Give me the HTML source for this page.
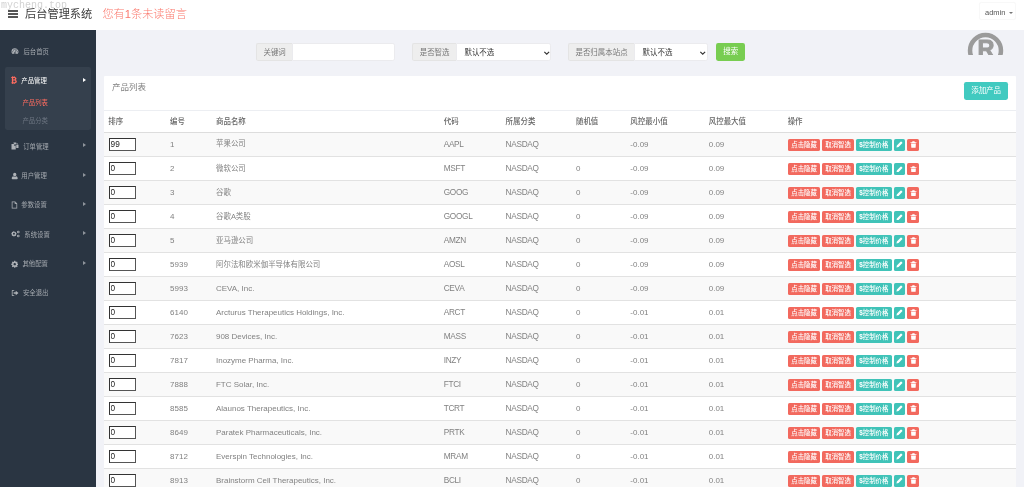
<!DOCTYPE html>
<html lang="zh-CN">
<head>
<meta charset="utf-8">
<title>后台管理系统</title>
<style>
html,body{margin:0;padding:0;width:1024px;height:487px;overflow:hidden;background:#f1f2f7}
*{box-sizing:border-box}
#app{position:absolute;left:0;top:0;width:1920px;height:914px;zoom:0.533333;font-family:"Liberation Sans","Noto Sans CJK SC",sans-serif;font-size:13px;line-height:1.428571;color:#797979;overflow:hidden;will-change:transform}
a{text-decoration:none;color:inherit}
/* header */
.header{position:absolute;left:0;top:0;width:1920px;height:56px;background:#fff}
.toggle{position:absolute;left:15px;top:19px;width:18px;height:15px}
.toggle i{display:block;height:3px;background:#555;margin-bottom:2.500px;border-radius:.5px}
.logo{position:absolute;left:47px;top:11px;height:32px;line-height:32px;font-size:21px;color:#3c3c3c;white-space:nowrap}
.notice{position:absolute;left:192px;top:11px;height:32px;line-height:32px;font-size:21px;color:#fb786d;font-weight:300;white-space:nowrap}
.user{position:absolute;left:1836px;top:3px;width:69px;height:35px;border:1px solid #f8f8f8;border-radius:4px;font-size:14px;color:#555;line-height:33px;padding-left:9px;padding-top:3px;white-space:nowrap}
.user .caret{display:inline-block;width:0;height:0;border-left:4.500px solid transparent;border-right:4.500px solid transparent;border-top:4.500px solid #777;margin-left:7px;vertical-align:2px}
/* sidebar */
.sidebar{position:absolute;left:0;top:56px;width:180px;height:858px;background:#2a3542}
.menu{list-style:none;margin:15px 0 0 0;padding:0}
.menu>li{margin:0 10px 5px 10px;border-radius:4px;position:relative}
.menu>li>a{display:block;height:50px;line-height:50px;padding-left:10px;font-size:12px;color:#a4a9af;position:relative;white-space:nowrap}
.menu>li>a svg{position:absolute;left:10px;top:18px}
.menu>li>a span{position:absolute;top:1.800px}
.menu>li.active{background:#35404d}
.menu>li.active>a{color:#fff}
.arr{position:absolute;left:145px;top:20px;width:0;height:0;border-top:4.700px solid transparent;border-bottom:4.700px solid transparent;border-left:6.500px solid #8f959c}
.active .arr{border-left-color:#fff}
.sub{list-style:none;margin:0;padding:0 0 0 0}
.sub li{height:36px;line-height:34px;padding-left:32px;font-size:12px;color:#6d7682;white-space:nowrap}
.sub li.on{color:#ff6c60}
.sub li:last-child{height:32px;line-height:31px}
/* search */
.grp{position:absolute;top:81px;height:34px;font-size:14px}
.addon{position:absolute;left:0;top:0;height:34px;line-height:32px;border:1px solid #e4e4e4;border-right:0;background:#eee;color:#777;text-align:center;border-radius:4px 0 0 4px;white-space:nowrap}
.ctl{position:absolute;top:0;height:34px;line-height:32px;border:1px solid #ebebee;background:#fff;border-radius:0 4px 4px 0;color:#333;padding-left:14px;white-space:nowrap}
.ctl svg{position:absolute;right:.5px;top:11px}
.go{position:absolute;left:1343px;top:81px;width:54px;height:34px;line-height:34px;background:#78cd51;color:#fff;font-size:14px;text-align:center;border-radius:4px}
/* panel */
.panel{position:absolute;left:195px;top:143px;width:1710px;height:800px;background:#fff;border-radius:2px 2px 0 0}
.ptitle{position:absolute;left:15px;top:9px;font-size:16px;line-height:26px;color:#808080;font-weight:400;white-space:nowrap}
.add{position:absolute;left:1613px;top:11px;width:82px;height:34px;line-height:34px;background:#41cac0;color:#fff;font-size:14px;text-align:center;border-radius:4px;white-space:nowrap}
table{position:absolute;left:0;top:63.500px;width:1710px;border-collapse:separate;border-spacing:0;table-layout:fixed;font-size:14px}
th,td{padding:0 8px;text-align:left;white-space:nowrap;overflow:hidden;vertical-align:middle}
th{height:42.500px;border-top:1px solid #eceef2;border-bottom:2px solid #ddd;font-weight:500;color:#666;padding-top:2px}
td{height:45px;border-top:1px solid #e2e2e2;color:#828282;padding-top:1px}
tbody tr:first-child td{border-top:0;height:44px}
tbody tr:nth-child(odd){background:#f9f9f9}
.c1{width:116px}.c2{width:86px}.c3{width:427px}.c4{width:116px}.c5{width:132px}.c6{width:102px}.c7{width:147px}.c8{width:148px}.c9{width:436px}
input.sort{display:block;position:relative;top:-.6px;width:50px;height:24.800px;padding-top:1px !important;margin-left:1.500px !important;border:2px solid #333;border-right-color:#555;border-bottom-color:#555;border-radius:0;padding:0 1px;margin:0;font-family:"Liberation Sans",sans-serif;font-size:15.500px;color:#222;background:#fff;outline:0}
.bx{display:inline-block;height:22px;line-height:22px;padding:0 6px;font-size:12px;font-weight:500;color:#fff;border-radius:3px;vertical-align:middle;white-space:nowrap}
.bx.red{background:#f2695e}
.bx.teal{background:#40c3b8}
.bx.sq{width:22px;padding:0;text-align:center}
.bx .ic{vertical-align:-2.500px}
.dl{font-weight:bold;font-size:12px;margin-right:0}
td.c9{padding-left:9px;word-spacing:0;letter-spacing:0}
.en{font-size:15px}
.up{font-size:15.500px;letter-spacing:-.55px}
/* overlays */
.wm{position:absolute;left:1px;top:-.6px;font-family:"Liberation Mono",monospace;font-size:10px;line-height:14px;color:#d2d2d2;white-space:nowrap;letter-spacing:0}
.reg{position:absolute;left:964px;top:30px;width:44px;height:25px;overflow:hidden}
</style>
</head>
<body>
<div id="app">
  <div class="header">
    <div class="toggle"><i></i><i></i><i></i></div>
    <a class="logo">后台管理系统</a>
    <span class="notice">您有1条未读留言</span>
    <div class="user">admin<i class="caret"></i></div>
  </div>

  <div class="sidebar">
    <ul class="menu">
      <li><a><svg width="15" height="15" viewBox="0 0 16 16"><path d="M8 2.500a7 7 0 0 0-7 7c0 1.500.5 2.900 1.300 4h11.400A7 7 0 0 0 8 2.500zm0 1.600a1 1 0 1 1 0 2 1 1 0 0 1 0-2zM3.500 10.500a1 1 0 1 1 0-2 1 1 0 0 1 0 2zm1.200-3.400a1 1 0 1 1 0-2 1 1 0 0 1 0 2zM9.300 11.300a1.500 1.500 0 1 1-1.800-1l1.200-4 1 .3-1.200 4c.4.100.7.400.8.700zm2-4.200a1 1 0 1 1 0-2 1 1 0 0 1 0 2zm1.200 3.400a1 1 0 1 1 0-2 1 1 0 0 1 0 2z" fill="#aeb2b7"/></svg><span style="left:34px">后台首页</span></a></li>
      <li class="active"><a><svg width="14" height="16" viewBox="0 0 12 16" preserveAspectRatio="none" style="left:8px;top:16px"><path d="M2 2h1.500V.5H5V2h1V.5h1.500v1.600C9.300 2.400 10.400 3.300 10.400 5c0 1.200-.6 2-1.500 2.400 1.300.4 2.100 1.300 2.100 2.800 0 2.100-1.400 3.200-3.500 3.400v1.700H6V13.700H5v1.600H3.500V13.700H2v-1.600h1V3.600H2zm3.200 1.700v3h1.300c1 0 1.600-.5 1.600-1.500S7.500 3.700 6.500 3.700zm0 4.700v3.500h1.600c1.100 0 1.800-.6 1.800-1.700s-.7-1.800-1.900-1.800z" fill="#ff6c60"/></svg><span style="left:30px">产品管理</span><i class="arr"></i></a>
        <ul class="sub"><li class="on">产品列表</li><li>产品分类</li></ul>
      </li>
      <li><a><svg width="15" height="15" viewBox="0 0 16 16"><path d="M1 4h5v3.500h3.500V15H1zM7 4l2.500 2.500H7zM5 1h5v3.500H7L5 2.700zm6 0l3.500 3.500H11zm0 4.500h4V12h-4.500V6.500z" fill="#aeb2b7"/></svg><span style="left:33.500px">订单管理</span><i class="arr"></i></a></li>
      <li><a><svg width="14" height="15" viewBox="0 0 14 16"><path d="M7 1.500a3.300 3.300 0 0 1 3.300 3.300c0 1.900-1.500 3.700-3.300 3.700S3.700 6.700 3.700 4.800A3.300 3.300 0 0 1 7 1.500zM1 13.200c0-2.600 1.200-4.300 3-4.700.8.700 1.800 1.100 3 1.100s2.200-.4 3-1.100c1.800.4 3 2.100 3 4.700 0 .9-.7 1.500-1.600 1.500H2.600c-.9 0-1.600-.6-1.600-1.500z" fill="#aeb2b7"/></svg><span style="left:30px">用户管理</span><i class="arr"></i></a></li>
      <li><a><svg width="13" height="15" viewBox="0 0 14 16"><path d="M1.500 1h7l4 4v10h-11zM3 2.500v11h8V6H7.500V2.500zM9 3v1.500h1.500z" fill="#aeb2b7" fill-rule="evenodd"/></svg><span style="left:30px">参数设置</span><i class="arr"></i></a></li>
      <li><a><svg width="18" height="15" viewBox="0 0 19 16"><g fill="#aeb2b7"><path d="M6.500 4.200l1.300.3.800-.9 1.300.9-.5 1.100.7 1.100 1.200.1v1.600l-1.200.3-.5 1.200.7 1-1.100 1.100-1.100-.6-1.200.5-.3 1.200H5l-.3-1.200-1.200-.5-1 .6-1.200-1.100.7-1-.5-1.200L.300 8.400V6.800l1.200-.2.500-1.200-.7-1 1.200-1.100 1 .6 1.200-.5.300-1.200h1.600zM5.800 5.600a2 2 0 1 0 0 4 2 2 0 0 0 0-4z" fill-rule="evenodd"/><circle cx="14.500" cy="4" r="2.600"/><circle cx="14.500" cy="12" r="2.600"/></g><circle cx="14.500" cy="4" r="1" fill="#2a3542"/><circle cx="14.500" cy="12" r="1" fill="#2a3542"/></svg><span style="left:35.500px">系统设置</span><i class="arr"></i></a></li>
      <li><a><svg width="14" height="15" viewBox="0 0 16 16"><path d="M9.200 1l.4 1.900 1.300.6 1.700-1 1.600 1.600-1 1.700.6 1.300 1.900.4v2.300l-1.900.4-.6 1.300 1 1.700-1.600 1.600-1.700-1-1.300.6-.4 1.900H6.900l-.4-1.900-1.300-.6-1.700 1-1.600-1.600 1-1.700-.6-1.300L.400 9.800V7.500l1.900-.4.600-1.300-1-1.700L3.500 2.500l1.700 1 1.300-.6L6.900 1zM8 5.700a2.600 2.600 0 1 0 0 5.200 2.600 2.600 0 0 0 0-5.200z" fill="#aeb2b7" fill-rule="evenodd"/></svg><span style="left:32px">其他配置</span><i class="arr"></i></a></li>
      <li><a><svg width="15" height="15" viewBox="0 0 16 16"><path d="M6.500 2v1.600H3.200v8.800h3.300V14H2.400A.8.800 0 0 1 1.600 13.200V2.800A.8.800 0 0 1 2.400 2zM9.500 3.500L15 8l-5.500 4.500V9.700H5.300V6.300h4.200z" fill="#aeb2b7"/></svg><span style="left:33px">安全退出</span></a></li>
    </ul>
  </div>

  <div class="grp" style="left:480px;width:261px"><span class="addon" style="width:68px">关键词</span><span class="ctl" style="left:68px;width:193px"></span></div>
  <div class="grp" style="left:773px;width:261px"><span class="addon" style="width:82px">是否智选</span><span class="ctl" style="left:82px;width:179px">默认不选<svg width="14" height="12" viewBox="0 0 14 12"><path d="M2.500 3.500L7 8l4.500-4.500" fill="none" stroke="#333" stroke-width="2.200"/></svg></span></div>
  <div class="grp" style="left:1065px;width:262px"><span class="addon" style="width:124px">是否归属本站点</span><span class="ctl" style="left:124px;width:138px">默认不选<svg width="14" height="12" viewBox="0 0 14 12"><path d="M2.500 3.500L7 8l4.500-4.500" fill="none" stroke="#333" stroke-width="2.200"/></svg></span></div>
  <a class="go">搜索</a>

  <div class="panel">
    <div class="ptitle">产品列表</div>
    <a class="add">添加产品</a>
    <table>
      <thead><tr><th class="c1">排序</th><th class="c2">编号</th><th class="c3">商品名称</th><th class="c4">代码</th><th class="c5">所属分类</th><th class="c6">随机值</th><th class="c7">风控最小值</th><th class="c8">风控最大值</th><th class="c9">操作</th></tr></thead>
      <tbody>
<tr><td class="c1"><input class="sort" type="text" value="99"></td><td class="c2 en">1</td><td class="c3">苹果公司</td><td class="c4 up">AAPL</td><td class="c5 up">NASDAQ</td><td class="c6 en"></td><td class="c7 en">-0.09</td><td class="c8 en">0.09</td><td class="c9"><a class="bx red">点击隐藏</a> <a class="bx red">取消智选</a> <a class="bx teal"><b class="dl">$</b>控制价格</a> <a class="bx teal sq"><svg class="ic" viewBox="0 0 12 12" width="13" height="13"><path d="M.8 11.200l.7-3.600L7.900 1.200a1.200 1.200 0 0 1 1.700 0l1.200 1.200a1.200 1.200 0 0 1 0 1.700L4.400 10.500z" fill="#fff"/></svg></a> <a class="bx red sq"><svg class="ic" viewBox="0 0 12 12" width="13" height="13"><path d="M4.300.5h3.400l.8 1.500H11.200v1.500H.8V2h2.700zM1.800 4.200h8.400l-.5 7.300H2.300z" fill="#fff"/></svg></a></td></tr>
<tr><td class="c1"><input class="sort" type="text" value="0"></td><td class="c2 en">2</td><td class="c3">微软公司</td><td class="c4 up">MSFT</td><td class="c5 up">NASDAQ</td><td class="c6 en">0</td><td class="c7 en">-0.09</td><td class="c8 en">0.09</td><td class="c9"><a class="bx red">点击隐藏</a> <a class="bx red">取消智选</a> <a class="bx teal"><b class="dl">$</b>控制价格</a> <a class="bx teal sq"><svg class="ic" viewBox="0 0 12 12" width="13" height="13"><path d="M.8 11.200l.7-3.600L7.900 1.200a1.200 1.200 0 0 1 1.700 0l1.200 1.200a1.200 1.200 0 0 1 0 1.700L4.400 10.500z" fill="#fff"/></svg></a> <a class="bx red sq"><svg class="ic" viewBox="0 0 12 12" width="13" height="13"><path d="M4.300.5h3.400l.8 1.500H11.200v1.500H.8V2h2.700zM1.800 4.200h8.400l-.5 7.300H2.300z" fill="#fff"/></svg></a></td></tr>
<tr><td class="c1"><input class="sort" type="text" value="0"></td><td class="c2 en">3</td><td class="c3">谷歌</td><td class="c4 up">GOOG</td><td class="c5 up">NASDAQ</td><td class="c6 en">0</td><td class="c7 en">-0.09</td><td class="c8 en">0.09</td><td class="c9"><a class="bx red">点击隐藏</a> <a class="bx red">取消智选</a> <a class="bx teal"><b class="dl">$</b>控制价格</a> <a class="bx teal sq"><svg class="ic" viewBox="0 0 12 12" width="13" height="13"><path d="M.8 11.200l.7-3.600L7.900 1.200a1.200 1.200 0 0 1 1.700 0l1.200 1.200a1.200 1.200 0 0 1 0 1.700L4.400 10.500z" fill="#fff"/></svg></a> <a class="bx red sq"><svg class="ic" viewBox="0 0 12 12" width="13" height="13"><path d="M4.300.5h3.400l.8 1.500H11.200v1.500H.8V2h2.700zM1.800 4.200h8.400l-.5 7.300H2.300z" fill="#fff"/></svg></a></td></tr>
<tr><td class="c1"><input class="sort" type="text" value="0"></td><td class="c2 en">4</td><td class="c3">谷歌A类股</td><td class="c4 up">GOOGL</td><td class="c5 up">NASDAQ</td><td class="c6 en">0</td><td class="c7 en">-0.09</td><td class="c8 en">0.09</td><td class="c9"><a class="bx red">点击隐藏</a> <a class="bx red">取消智选</a> <a class="bx teal"><b class="dl">$</b>控制价格</a> <a class="bx teal sq"><svg class="ic" viewBox="0 0 12 12" width="13" height="13"><path d="M.8 11.200l.7-3.600L7.900 1.200a1.200 1.200 0 0 1 1.700 0l1.200 1.200a1.200 1.200 0 0 1 0 1.700L4.400 10.500z" fill="#fff"/></svg></a> <a class="bx red sq"><svg class="ic" viewBox="0 0 12 12" width="13" height="13"><path d="M4.300.5h3.400l.8 1.500H11.200v1.500H.8V2h2.700zM1.800 4.200h8.400l-.5 7.300H2.300z" fill="#fff"/></svg></a></td></tr>
<tr><td class="c1"><input class="sort" type="text" value="0"></td><td class="c2 en">5</td><td class="c3">亚马逊公司</td><td class="c4 up">AMZN</td><td class="c5 up">NASDAQ</td><td class="c6 en">0</td><td class="c7 en">-0.09</td><td class="c8 en">0.09</td><td class="c9"><a class="bx red">点击隐藏</a> <a class="bx red">取消智选</a> <a class="bx teal"><b class="dl">$</b>控制价格</a> <a class="bx teal sq"><svg class="ic" viewBox="0 0 12 12" width="13" height="13"><path d="M.8 11.200l.7-3.600L7.900 1.200a1.200 1.200 0 0 1 1.700 0l1.200 1.200a1.200 1.200 0 0 1 0 1.700L4.400 10.500z" fill="#fff"/></svg></a> <a class="bx red sq"><svg class="ic" viewBox="0 0 12 12" width="13" height="13"><path d="M4.300.5h3.400l.8 1.500H11.200v1.500H.8V2h2.700zM1.800 4.200h8.400l-.5 7.300H2.300z" fill="#fff"/></svg></a></td></tr>
<tr><td class="c1"><input class="sort" type="text" value="0"></td><td class="c2 en">5939</td><td class="c3">阿尔法和欧米伽半导体有限公司</td><td class="c4 up">AOSL</td><td class="c5 up">NASDAQ</td><td class="c6 en">0</td><td class="c7 en">-0.09</td><td class="c8 en">0.09</td><td class="c9"><a class="bx red">点击隐藏</a> <a class="bx red">取消智选</a> <a class="bx teal"><b class="dl">$</b>控制价格</a> <a class="bx teal sq"><svg class="ic" viewBox="0 0 12 12" width="13" height="13"><path d="M.8 11.200l.7-3.600L7.900 1.200a1.200 1.200 0 0 1 1.700 0l1.200 1.200a1.200 1.200 0 0 1 0 1.700L4.400 10.500z" fill="#fff"/></svg></a> <a class="bx red sq"><svg class="ic" viewBox="0 0 12 12" width="13" height="13"><path d="M4.300.5h3.400l.8 1.500H11.200v1.500H.8V2h2.700zM1.800 4.200h8.400l-.5 7.300H2.300z" fill="#fff"/></svg></a></td></tr>
<tr><td class="c1"><input class="sort" type="text" value="0"></td><td class="c2 en">5993</td><td class="c3 en">CEVA, Inc.</td><td class="c4 up">CEVA</td><td class="c5 up">NASDAQ</td><td class="c6 en">0</td><td class="c7 en">-0.09</td><td class="c8 en">0.09</td><td class="c9"><a class="bx red">点击隐藏</a> <a class="bx red">取消智选</a> <a class="bx teal"><b class="dl">$</b>控制价格</a> <a class="bx teal sq"><svg class="ic" viewBox="0 0 12 12" width="13" height="13"><path d="M.8 11.200l.7-3.600L7.900 1.200a1.200 1.200 0 0 1 1.700 0l1.200 1.200a1.200 1.200 0 0 1 0 1.700L4.400 10.500z" fill="#fff"/></svg></a> <a class="bx red sq"><svg class="ic" viewBox="0 0 12 12" width="13" height="13"><path d="M4.300.5h3.400l.8 1.500H11.200v1.500H.8V2h2.700zM1.800 4.200h8.400l-.5 7.300H2.300z" fill="#fff"/></svg></a></td></tr>
<tr><td class="c1"><input class="sort" type="text" value="0"></td><td class="c2 en">6140</td><td class="c3 en">Arcturus Therapeutics Holdings, Inc.</td><td class="c4 up">ARCT</td><td class="c5 up">NASDAQ</td><td class="c6 en">0</td><td class="c7 en">-0.01</td><td class="c8 en">0.01</td><td class="c9"><a class="bx red">点击隐藏</a> <a class="bx red">取消智选</a> <a class="bx teal"><b class="dl">$</b>控制价格</a> <a class="bx teal sq"><svg class="ic" viewBox="0 0 12 12" width="13" height="13"><path d="M.8 11.200l.7-3.600L7.900 1.200a1.200 1.200 0 0 1 1.700 0l1.200 1.200a1.200 1.200 0 0 1 0 1.700L4.400 10.500z" fill="#fff"/></svg></a> <a class="bx red sq"><svg class="ic" viewBox="0 0 12 12" width="13" height="13"><path d="M4.300.5h3.400l.8 1.500H11.200v1.500H.8V2h2.700zM1.800 4.200h8.400l-.5 7.300H2.300z" fill="#fff"/></svg></a></td></tr>
<tr><td class="c1"><input class="sort" type="text" value="0"></td><td class="c2 en">7623</td><td class="c3 en">908 Devices, Inc.</td><td class="c4 up">MASS</td><td class="c5 up">NASDAQ</td><td class="c6 en">0</td><td class="c7 en">-0.01</td><td class="c8 en">0.01</td><td class="c9"><a class="bx red">点击隐藏</a> <a class="bx red">取消智选</a> <a class="bx teal"><b class="dl">$</b>控制价格</a> <a class="bx teal sq"><svg class="ic" viewBox="0 0 12 12" width="13" height="13"><path d="M.8 11.200l.7-3.600L7.900 1.200a1.200 1.200 0 0 1 1.700 0l1.200 1.200a1.200 1.200 0 0 1 0 1.700L4.400 10.500z" fill="#fff"/></svg></a> <a class="bx red sq"><svg class="ic" viewBox="0 0 12 12" width="13" height="13"><path d="M4.300.5h3.400l.8 1.500H11.200v1.500H.8V2h2.700zM1.800 4.200h8.400l-.5 7.300H2.300z" fill="#fff"/></svg></a></td></tr>
<tr><td class="c1"><input class="sort" type="text" value="0"></td><td class="c2 en">7817</td><td class="c3 en">Inozyme Pharma, Inc.</td><td class="c4 up">INZY</td><td class="c5 up">NASDAQ</td><td class="c6 en">0</td><td class="c7 en">-0.01</td><td class="c8 en">0.01</td><td class="c9"><a class="bx red">点击隐藏</a> <a class="bx red">取消智选</a> <a class="bx teal"><b class="dl">$</b>控制价格</a> <a class="bx teal sq"><svg class="ic" viewBox="0 0 12 12" width="13" height="13"><path d="M.8 11.200l.7-3.600L7.900 1.200a1.200 1.200 0 0 1 1.700 0l1.200 1.200a1.200 1.200 0 0 1 0 1.700L4.400 10.500z" fill="#fff"/></svg></a> <a class="bx red sq"><svg class="ic" viewBox="0 0 12 12" width="13" height="13"><path d="M4.300.5h3.400l.8 1.500H11.200v1.500H.8V2h2.700zM1.800 4.200h8.400l-.5 7.300H2.300z" fill="#fff"/></svg></a></td></tr>
<tr><td class="c1"><input class="sort" type="text" value="0"></td><td class="c2 en">7888</td><td class="c3 en">FTC Solar, Inc.</td><td class="c4 up">FTCI</td><td class="c5 up">NASDAQ</td><td class="c6 en">0</td><td class="c7 en">-0.01</td><td class="c8 en">0.01</td><td class="c9"><a class="bx red">点击隐藏</a> <a class="bx red">取消智选</a> <a class="bx teal"><b class="dl">$</b>控制价格</a> <a class="bx teal sq"><svg class="ic" viewBox="0 0 12 12" width="13" height="13"><path d="M.8 11.200l.7-3.600L7.900 1.200a1.200 1.200 0 0 1 1.700 0l1.200 1.200a1.200 1.200 0 0 1 0 1.700L4.400 10.500z" fill="#fff"/></svg></a> <a class="bx red sq"><svg class="ic" viewBox="0 0 12 12" width="13" height="13"><path d="M4.300.5h3.400l.8 1.500H11.200v1.500H.8V2h2.700zM1.800 4.200h8.400l-.5 7.300H2.300z" fill="#fff"/></svg></a></td></tr>
<tr><td class="c1"><input class="sort" type="text" value="0"></td><td class="c2 en">8585</td><td class="c3 en">Alaunos Therapeutics, Inc.</td><td class="c4 up">TCRT</td><td class="c5 up">NASDAQ</td><td class="c6 en">0</td><td class="c7 en">-0.01</td><td class="c8 en">0.01</td><td class="c9"><a class="bx red">点击隐藏</a> <a class="bx red">取消智选</a> <a class="bx teal"><b class="dl">$</b>控制价格</a> <a class="bx teal sq"><svg class="ic" viewBox="0 0 12 12" width="13" height="13"><path d="M.8 11.200l.7-3.600L7.900 1.200a1.200 1.200 0 0 1 1.700 0l1.200 1.200a1.200 1.200 0 0 1 0 1.700L4.400 10.500z" fill="#fff"/></svg></a> <a class="bx red sq"><svg class="ic" viewBox="0 0 12 12" width="13" height="13"><path d="M4.300.5h3.400l.8 1.500H11.200v1.500H.8V2h2.700zM1.800 4.200h8.400l-.5 7.300H2.300z" fill="#fff"/></svg></a></td></tr>
<tr><td class="c1"><input class="sort" type="text" value="0"></td><td class="c2 en">8649</td><td class="c3 en">Paratek Pharmaceuticals, Inc.</td><td class="c4 up">PRTK</td><td class="c5 up">NASDAQ</td><td class="c6 en">0</td><td class="c7 en">-0.01</td><td class="c8 en">0.01</td><td class="c9"><a class="bx red">点击隐藏</a> <a class="bx red">取消智选</a> <a class="bx teal"><b class="dl">$</b>控制价格</a> <a class="bx teal sq"><svg class="ic" viewBox="0 0 12 12" width="13" height="13"><path d="M.8 11.200l.7-3.600L7.900 1.200a1.200 1.200 0 0 1 1.700 0l1.200 1.200a1.200 1.200 0 0 1 0 1.700L4.400 10.500z" fill="#fff"/></svg></a> <a class="bx red sq"><svg class="ic" viewBox="0 0 12 12" width="13" height="13"><path d="M4.300.5h3.400l.8 1.500H11.200v1.500H.8V2h2.700zM1.800 4.200h8.400l-.5 7.300H2.300z" fill="#fff"/></svg></a></td></tr>
<tr><td class="c1"><input class="sort" type="text" value="0"></td><td class="c2 en">8712</td><td class="c3 en">Everspin Technologies, Inc.</td><td class="c4 up">MRAM</td><td class="c5 up">NASDAQ</td><td class="c6 en">0</td><td class="c7 en">-0.01</td><td class="c8 en">0.01</td><td class="c9"><a class="bx red">点击隐藏</a> <a class="bx red">取消智选</a> <a class="bx teal"><b class="dl">$</b>控制价格</a> <a class="bx teal sq"><svg class="ic" viewBox="0 0 12 12" width="13" height="13"><path d="M.8 11.200l.7-3.600L7.900 1.200a1.200 1.200 0 0 1 1.700 0l1.200 1.200a1.200 1.200 0 0 1 0 1.700L4.400 10.500z" fill="#fff"/></svg></a> <a class="bx red sq"><svg class="ic" viewBox="0 0 12 12" width="13" height="13"><path d="M4.300.5h3.400l.8 1.500H11.200v1.500H.8V2h2.700zM1.800 4.200h8.400l-.5 7.300H2.300z" fill="#fff"/></svg></a></td></tr>
<tr><td class="c1"><input class="sort" type="text" value="0"></td><td class="c2 en">8913</td><td class="c3 en">Brainstorm Cell Therapeutics, Inc.</td><td class="c4 up">BCLI</td><td class="c5 up">NASDAQ</td><td class="c6 en">0</td><td class="c7 en">-0.01</td><td class="c8 en">0.01</td><td class="c9"><a class="bx red">点击隐藏</a> <a class="bx red">取消智选</a> <a class="bx teal"><b class="dl">$</b>控制价格</a> <a class="bx teal sq"><svg class="ic" viewBox="0 0 12 12" width="13" height="13"><path d="M.8 11.200l.7-3.600L7.900 1.200a1.200 1.200 0 0 1 1.700 0l1.200 1.200a1.200 1.200 0 0 1 0 1.700L4.400 10.500z" fill="#fff"/></svg></a> <a class="bx red sq"><svg class="ic" viewBox="0 0 12 12" width="13" height="13"><path d="M4.300.5h3.400l.8 1.500H11.200v1.500H.8V2h2.700zM1.800 4.200h8.400l-.5 7.300H2.300z" fill="#fff"/></svg></a></td></tr>
<tr><td class="c1"><input class="sort" type="text" value="0"></td><td class="c2 en">9120</td><td class="c3 en">Candel Therapeutics, Inc.</td><td class="c4 up">CADL</td><td class="c5 up">NASDAQ</td><td class="c6 en">0</td><td class="c7 en">-0.01</td><td class="c8 en">0.01</td><td class="c9"><a class="bx red">点击隐藏</a> <a class="bx red">取消智选</a> <a class="bx teal"><b class="dl">$</b>控制价格</a> <a class="bx teal sq"><svg class="ic" viewBox="0 0 12 12" width="13" height="13"><path d="M.8 11.200l.7-3.600L7.900 1.200a1.200 1.200 0 0 1 1.700 0l1.200 1.200a1.200 1.200 0 0 1 0 1.700L4.400 10.500z" fill="#fff"/></svg></a> <a class="bx red sq"><svg class="ic" viewBox="0 0 12 12" width="13" height="13"><path d="M4.300.5h3.400l.8 1.500H11.200v1.500H.8V2h2.700zM1.800 4.200h8.400l-.5 7.300H2.300z" fill="#fff"/></svg></a></td></tr>
      </tbody>
    </table>
  </div>
</div>
<div class="wm">mycheng.top</div>
<div class="reg"><svg width="44" height="44" viewBox="0 0 44 44"><circle cx="21.500" cy="20.500" r="15.450" fill="none" stroke="#9b9b9b" stroke-width="4.500"/><text x="22" y="26.500" text-anchor="middle" font-family="Liberation Sans, sans-serif" font-weight="bold" font-size="23.500" fill="#9b9b9b" stroke="#9b9b9b" stroke-width="0.900" stroke-linejoin="miter">R</text></svg></div>
</body>
</html>
